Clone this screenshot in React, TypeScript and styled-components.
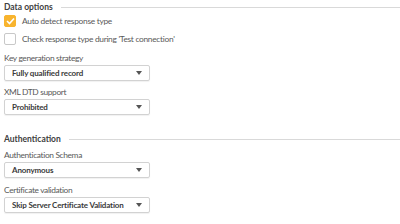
import React from "react";
import styled, { createGlobalStyle } from "styled-components";

const Global = createGlobalStyle`
  html, body { margin: 0; padding: 0; background: #fff; }
  body { font-family: Lato, "Noto Sans", sans-serif; }
`;

const Page = styled.div`
  width: 400px;
  height: 224px;
  padding: 1px 0 0 4px;
  box-sizing: border-box;
  display: flex;
  flex-direction: column;
  overflow: hidden;
`;

const Section = styled.section<{ $top?: number }>`
  display: flex;
  flex-direction: column;
  margin-top: ${(p) => p.$top ?? 0}px;
`;

const Heading = styled.div`
  display: flex;
  align-items: center;
  gap: 8px;
  height: 12px;
  font-size: 8.5px;
  font-weight: 700;
  color: #404040;
  white-space: nowrap;
  &::after {
    content: "";
    flex: 1;
    height: 1px;
    background: #d9d9d9;
  }
`;

const CheckList = styled.div`
  display: flex;
  flex-direction: column;
  gap: 6px;
  margin-top: 2px;
`;

const CheckRow = styled.label`
  display: flex;
  align-items: center;
  gap: 6px;
  height: 12px;
  font-size: 8.4px;
  letter-spacing: -0.3px;
  color: #595959;
  white-space: nowrap;
`;

const Box = styled.span<{ $checked?: boolean }>`
  width: 12px;
  height: 12px;
  box-sizing: border-box;
  border-radius: 2px;
  display: flex;
  align-items: center;
  justify-content: center;
  background: ${(p) => (p.$checked ? "#f8b42e" : "#fff")};
  border: 1px solid ${(p) => (p.$checked ? "#f8b42e" : "#c8c8c8")};
`;

const Field = styled.div<{ $top: number }>`
  display: flex;
  flex-direction: column;
  gap: 1px;
  margin-top: ${(p) => p.$top}px;
`;

const Label = styled.div`
  height: 12px;
  line-height: 12px;
  font-size: 8.4px;
  letter-spacing: -0.35px;
  color: #595959;
  white-space: nowrap;
`;

const Select = styled.div`
  width: 146px;
  height: 16px;
  box-sizing: border-box;
  border: 1px solid #d2d2d2;
  border-radius: 2px;
  box-shadow: 0 1px 1px rgba(0, 0, 0, 0.06);
  display: flex;
  align-items: center;
  justify-content: space-between;
  padding: 0 7px 0 7px;
  font-size: 8px;
  letter-spacing: -0.15px;
  font-weight: 700;
  color: #3a3a3a;
  white-space: nowrap;
`;

const Arrow = () => (
  <svg width="6" height="4" viewBox="0 0 6 4">
    <path d="M0 0 H6 L3 4 Z" fill="#555" />
  </svg>
);

const Check = () => (
  <svg width="9" height="8" viewBox="0 0 9 8">
    <path d="M1 4 L3.5 6.5 L8 1.5" stroke="#fff" strokeWidth="1.6" fill="none" />
  </svg>
);

const Dropdown = ({ label, value, top }: { label: string; value: string; top: number }) => (
  <Field $top={top}>
    <Label>{label}</Label>
    <Select>
      <span>{value}</span>
      <Arrow />
    </Select>
  </Field>
);

export default function App() {
  return (
    <>
      <Global />
      <Page>
        <Section>
          <Heading>Data options</Heading>
          <CheckList>
            <CheckRow>
              <Box $checked>
                <Check />
              </Box>
              Auto detect response type
            </CheckRow>
            <CheckRow>
              <Box />
              Check response type during 'Test connection'
            </CheckRow>
          </CheckList>
          <Dropdown top={7} label="Key generation strategy" value="Fully qualified record" />
          <Dropdown top={5} label="XML DTD support" value="Prohibited" />
        </Section>
        <Section $top={18}>
          <Heading>Authentication</Heading>
          <Dropdown top={4} label="Authentication Schema" value="Anonymous" />
          <Dropdown top={6} label="Certificate validation" value="Skip Server Certificate Validation" />
        </Section>
      </Page>
    </>
  );
}
